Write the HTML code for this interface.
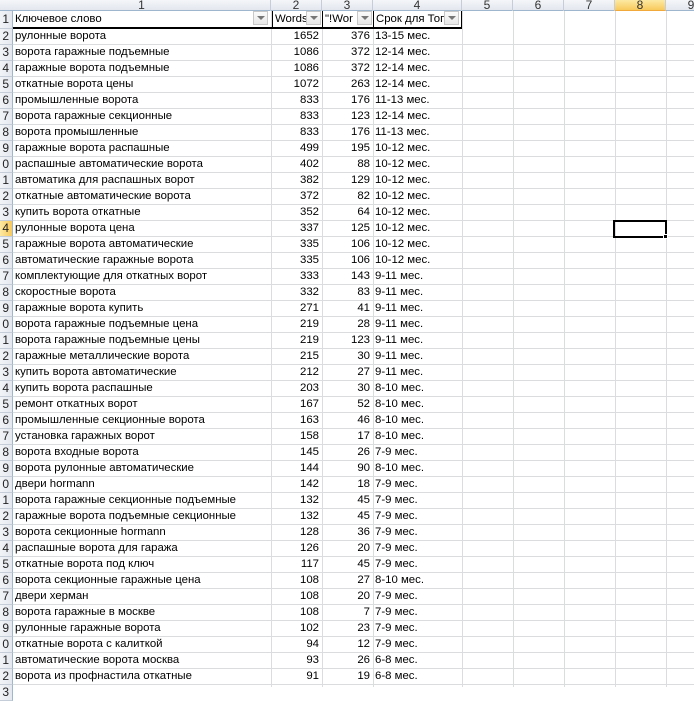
<!DOCTYPE html>
<html><head><meta charset="utf-8"><style>
*{margin:0;padding:0;box-sizing:border-box}
body{width:694px;height:687px;overflow:hidden;background:#fff;font-family:"Liberation Sans",sans-serif;font-size:11.4px;color:#000;position:relative}
.hdr{position:absolute;top:0;left:0;width:694px;height:11px;background:linear-gradient(#f4f6f9,#e3e7ee);border-bottom:1px solid #9eb6ce}
.ch{position:absolute;top:0;height:11px;line-height:11px;text-align:center;color:#333;font-size:12px;border-right:1px solid #c5cdd8;overflow:hidden}
.rh{position:absolute;left:0;width:13px;height:16px;background:linear-gradient(90deg,#f1f3f7,#e4e8ee);border-right:1px solid #9eb6ce;border-bottom:1px solid #c5cdd8;text-align:right;padding-right:3px;line-height:15px;color:#222;font-size:12px;overflow:hidden}
.vl{position:absolute;top:11px;height:676px;width:1px;background:#dadcdd}
.r{position:absolute;left:13px;width:681px;height:16px;border-bottom:1px solid #dadcdd;line-height:15px}
.r span{position:absolute;top:0;white-space:nowrap}
.a{left:2px}.b{left:258px;width:48px;text-align:right}.c{left:309px;width:48px;text-align:right}.d{left:362px}
.fb{position:absolute;top:2px;width:15px;height:14px;background:linear-gradient(#fbfbfb,#e8e8e8);border:1px solid #c8c8c8}
.fb:after{content:"";position:absolute;left:3px;top:4px;border-left:4px solid transparent;border-right:4px solid transparent;border-top:4px solid #777}
</style></head><body>
<div class="hdr"></div>
<div class="ch" style="left:13px;width:258px">1</div>
<div class="ch" style="left:271px;width:51px">2</div>
<div class="ch" style="left:322px;width:51px">3</div>
<div class="ch" style="left:373px;width:89px">4</div>
<div class="ch" style="left:462px;width:51px">5</div>
<div class="ch" style="left:513px;width:51px">6</div>
<div class="ch" style="left:564px;width:51px">7</div>
<div class="ch" style="left:615px;width:51px;background:linear-gradient(#fde9a3,#f8c95c);border-bottom:1px solid #f2a93b">8</div>
<div class="ch" style="left:666px;width:51px">9</div>
<div class="vl" style="left:271px"></div><div class="vl" style="left:322px"></div><div class="vl" style="left:373px"></div><div class="vl" style="left:462px"></div><div class="vl" style="left:513px"></div><div class="vl" style="left:564px"></div><div class="vl" style="left:615px"></div><div class="vl" style="left:666px"></div>

<div class="rh" style="top:11px;height:18px;line-height:17px">1</div>
<div class="r" style="top:11px;height:18px;line-height:17px;border-bottom:2px solid #000;width:449px">
<span class="a" style="left:2px">Ключевое слово</span><span class="fb" style="left:240px"></span>
<span style="left:259px;width:50px;height:17px;border-left:1px solid #000;padding-left:2px;overflow:hidden">Words</span><span class="fb" style="left:293px"></span>
<span style="left:309px;width:51px;height:17px;border-left:1px solid #000;padding-left:2px;overflow:hidden">"!Wor</span><span class="fb" style="left:344px"></span>
<span style="left:360px;width:89px;height:17px;border-left:1px solid #000;border-right:1px solid #000;padding-left:2px;overflow:hidden">Срок для Топ</span><span class="fb" style="left:431px"></span>
</div>

<div class="rh" style="top:29px">2</div><div class="r" style="top:29px"><span class="a">рулонные ворота</span><span class="b">1652</span><span class="c">376</span><span class="d">13-15 мес.</span></div>
<div class="rh" style="top:45px">3</div><div class="r" style="top:45px"><span class="a">ворота гаражные подъемные</span><span class="b">1086</span><span class="c">372</span><span class="d">12-14 мес.</span></div>
<div class="rh" style="top:61px">4</div><div class="r" style="top:61px"><span class="a">гаражные ворота подъемные</span><span class="b">1086</span><span class="c">372</span><span class="d">12-14 мес.</span></div>
<div class="rh" style="top:77px">5</div><div class="r" style="top:77px"><span class="a">откатные ворота цены</span><span class="b">1072</span><span class="c">263</span><span class="d">12-14 мес.</span></div>
<div class="rh" style="top:93px">6</div><div class="r" style="top:93px"><span class="a">промышленные ворота</span><span class="b">833</span><span class="c">176</span><span class="d">11-13 мес.</span></div>
<div class="rh" style="top:109px">7</div><div class="r" style="top:109px"><span class="a">ворота гаражные секционные</span><span class="b">833</span><span class="c">123</span><span class="d">12-14 мес.</span></div>
<div class="rh" style="top:125px">8</div><div class="r" style="top:125px"><span class="a">ворота промышленные</span><span class="b">833</span><span class="c">176</span><span class="d">11-13 мес.</span></div>
<div class="rh" style="top:141px">9</div><div class="r" style="top:141px"><span class="a">гаражные ворота распашные</span><span class="b">499</span><span class="c">195</span><span class="d">10-12 мес.</span></div>
<div class="rh" style="top:157px">0</div><div class="r" style="top:157px"><span class="a">распашные автоматические ворота</span><span class="b">402</span><span class="c">88</span><span class="d">10-12 мес.</span></div>
<div class="rh" style="top:173px">1</div><div class="r" style="top:173px"><span class="a">автоматика для распашных ворот</span><span class="b">382</span><span class="c">129</span><span class="d">10-12 мес.</span></div>
<div class="rh" style="top:189px">2</div><div class="r" style="top:189px"><span class="a">откатные автоматические ворота</span><span class="b">372</span><span class="c">82</span><span class="d">10-12 мес.</span></div>
<div class="rh" style="top:205px">3</div><div class="r" style="top:205px"><span class="a">купить ворота откатные</span><span class="b">352</span><span class="c">64</span><span class="d">10-12 мес.</span></div>
<div class="rh" style="top:221px;background:linear-gradient(90deg,#fde9a3,#f8c95c)">4</div><div class="r" style="top:221px"><span class="a">рулонные ворота цена</span><span class="b">337</span><span class="c">125</span><span class="d">10-12 мес.</span></div>
<div class="rh" style="top:237px">5</div><div class="r" style="top:237px"><span class="a">гаражные ворота автоматические</span><span class="b">335</span><span class="c">106</span><span class="d">10-12 мес.</span></div>
<div class="rh" style="top:253px">6</div><div class="r" style="top:253px"><span class="a">автоматические гаражные ворота</span><span class="b">335</span><span class="c">106</span><span class="d">10-12 мес.</span></div>
<div class="rh" style="top:269px">7</div><div class="r" style="top:269px"><span class="a">комплектующие для откатных ворот</span><span class="b">333</span><span class="c">143</span><span class="d">9-11 мес.</span></div>
<div class="rh" style="top:285px">8</div><div class="r" style="top:285px"><span class="a">скоростные ворота</span><span class="b">332</span><span class="c">83</span><span class="d">9-11 мес.</span></div>
<div class="rh" style="top:301px">9</div><div class="r" style="top:301px"><span class="a">гаражные ворота купить</span><span class="b">271</span><span class="c">41</span><span class="d">9-11 мес.</span></div>
<div class="rh" style="top:317px">0</div><div class="r" style="top:317px"><span class="a">ворота гаражные подъемные цена</span><span class="b">219</span><span class="c">28</span><span class="d">9-11 мес.</span></div>
<div class="rh" style="top:333px">1</div><div class="r" style="top:333px"><span class="a">ворота гаражные подъемные цены</span><span class="b">219</span><span class="c">123</span><span class="d">9-11 мес.</span></div>
<div class="rh" style="top:349px">2</div><div class="r" style="top:349px"><span class="a">гаражные металлические ворота</span><span class="b">215</span><span class="c">30</span><span class="d">9-11 мес.</span></div>
<div class="rh" style="top:365px">3</div><div class="r" style="top:365px"><span class="a">купить ворота автоматические</span><span class="b">212</span><span class="c">27</span><span class="d">9-11 мес.</span></div>
<div class="rh" style="top:381px">4</div><div class="r" style="top:381px"><span class="a">купить ворота распашные</span><span class="b">203</span><span class="c">30</span><span class="d">8-10 мес.</span></div>
<div class="rh" style="top:397px">5</div><div class="r" style="top:397px"><span class="a">ремонт откатных ворот</span><span class="b">167</span><span class="c">52</span><span class="d">8-10 мес.</span></div>
<div class="rh" style="top:413px">6</div><div class="r" style="top:413px"><span class="a">промышленные секционные ворота</span><span class="b">163</span><span class="c">46</span><span class="d">8-10 мес.</span></div>
<div class="rh" style="top:429px">7</div><div class="r" style="top:429px"><span class="a">установка гаражных ворот</span><span class="b">158</span><span class="c">17</span><span class="d">8-10 мес.</span></div>
<div class="rh" style="top:445px">8</div><div class="r" style="top:445px"><span class="a">ворота входные ворота</span><span class="b">145</span><span class="c">26</span><span class="d">7-9 мес.</span></div>
<div class="rh" style="top:461px">9</div><div class="r" style="top:461px"><span class="a">ворота рулонные автоматические</span><span class="b">144</span><span class="c">90</span><span class="d">8-10 мес.</span></div>
<div class="rh" style="top:477px">0</div><div class="r" style="top:477px"><span class="a">двери hormann</span><span class="b">142</span><span class="c">18</span><span class="d">7-9 мес.</span></div>
<div class="rh" style="top:493px">1</div><div class="r" style="top:493px"><span class="a">ворота гаражные секционные подъемные</span><span class="b">132</span><span class="c">45</span><span class="d">7-9 мес.</span></div>
<div class="rh" style="top:509px">2</div><div class="r" style="top:509px"><span class="a">гаражные ворота подъемные секционные</span><span class="b">132</span><span class="c">45</span><span class="d">7-9 мес.</span></div>
<div class="rh" style="top:525px">3</div><div class="r" style="top:525px"><span class="a">ворота секционные hormann</span><span class="b">128</span><span class="c">36</span><span class="d">7-9 мес.</span></div>
<div class="rh" style="top:541px">4</div><div class="r" style="top:541px"><span class="a">распашные ворота для гаража</span><span class="b">126</span><span class="c">20</span><span class="d">7-9 мес.</span></div>
<div class="rh" style="top:557px">5</div><div class="r" style="top:557px"><span class="a">откатные ворота под ключ</span><span class="b">117</span><span class="c">45</span><span class="d">7-9 мес.</span></div>
<div class="rh" style="top:573px">6</div><div class="r" style="top:573px"><span class="a">ворота секционные гаражные цена</span><span class="b">108</span><span class="c">27</span><span class="d">8-10 мес.</span></div>
<div class="rh" style="top:589px">7</div><div class="r" style="top:589px"><span class="a">двери херман</span><span class="b">108</span><span class="c">20</span><span class="d">7-9 мес.</span></div>
<div class="rh" style="top:605px">8</div><div class="r" style="top:605px"><span class="a">ворота гаражные в москве</span><span class="b">108</span><span class="c">7</span><span class="d">7-9 мес.</span></div>
<div class="rh" style="top:621px">9</div><div class="r" style="top:621px"><span class="a">рулонные гаражные ворота</span><span class="b">102</span><span class="c">23</span><span class="d">7-9 мес.</span></div>
<div class="rh" style="top:637px">0</div><div class="r" style="top:637px"><span class="a">откатные ворота с калиткой</span><span class="b">94</span><span class="c">12</span><span class="d">7-9 мес.</span></div>
<div class="rh" style="top:653px">1</div><div class="r" style="top:653px"><span class="a">автоматические ворота москва</span><span class="b">93</span><span class="c">26</span><span class="d">6-8 мес.</span></div>
<div class="rh" style="top:669px">2</div><div class="r" style="top:669px"><span class="a">ворота из профнастила откатные</span><span class="b">91</span><span class="c">19</span><span class="d">6-8 мес.</span></div>
<div class="rh" style="top:685px">3</div>

<div style="position:absolute;left:613px;top:220px;width:54px;height:18px;border:2px solid #000"></div>
<div style="position:absolute;left:663px;top:234px;width:5px;height:5px;background:#000;border:1px solid #fff"></div>
</body></html>
